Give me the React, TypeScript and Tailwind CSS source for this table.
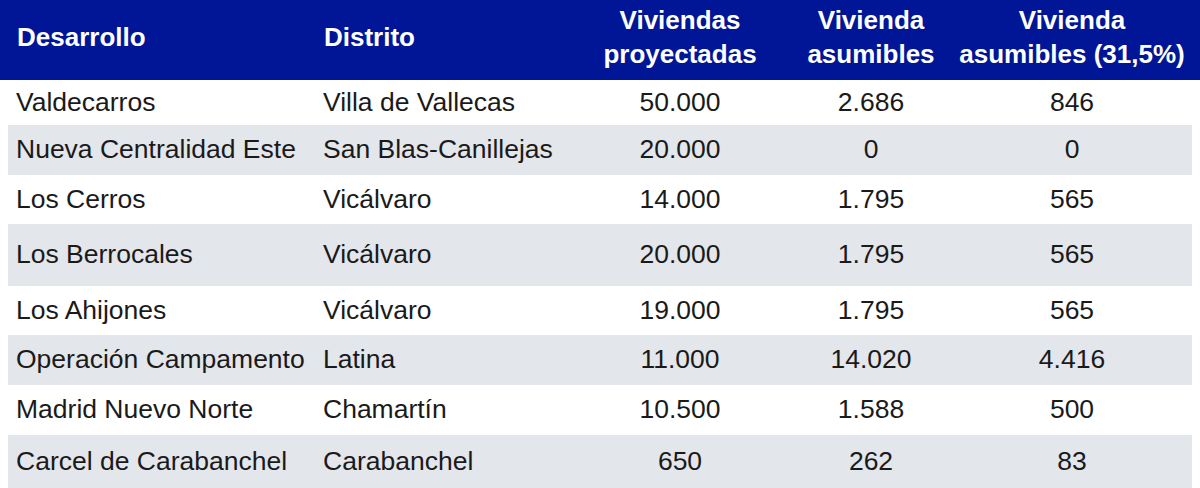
import React from 'react';

interface Row {
    desarrollo: string;
    distrito: string;
    proyectadas: string;
    asumibles: string;
    asumiblesPct: string;
    height: string;
}

const rows: Row[] = [
    { desarrollo: 'Valdecarros', distrito: 'Villa de Vallecas', proyectadas: '50.000', asumibles: '2.686', asumiblesPct: '846', height: 'h-[45px]' },
    { desarrollo: 'Nueva Centralidad Este', distrito: 'San Blas-Canillejas', proyectadas: '20.000', asumibles: '0', asumiblesPct: '0', height: 'h-[50px]' },
    { desarrollo: 'Los Cerros', distrito: 'Vicálvaro', proyectadas: '14.000', asumibles: '1.795', asumiblesPct: '565', height: 'h-[49px]' },
    { desarrollo: 'Los Berrocales', distrito: 'Vicálvaro', proyectadas: '20.000', asumibles: '1.795', asumiblesPct: '565', height: 'h-[62px]' },
    { desarrollo: 'Los Ahijones', distrito: 'Vicálvaro', proyectadas: '19.000', asumibles: '1.795', asumiblesPct: '565', height: 'h-[49px]' },
    { desarrollo: 'Operación Campamento', distrito: 'Latina', proyectadas: '11.000', asumibles: '14.020', asumiblesPct: '4.416', height: 'h-[50px]' },
    { desarrollo: 'Madrid Nuevo Norte', distrito: 'Chamartín', proyectadas: '10.500', asumibles: '1.588', asumiblesPct: '500', height: 'h-[50px]' },
    { desarrollo: 'Carcel de Carabanchel', distrito: 'Carabanchel', proyectadas: '650', asumibles: '262', asumiblesPct: '83', height: 'h-[53px]' },
];

const cols = 'grid grid-cols-[308px_254px_220px_162px_240px]';

export default function App() {
    return (
        <div className="w-[1200px] h-[488px] overflow-hidden bg-white font-['Liberation_Sans',Arial,sans-serif] text-[26px]">
            {/* Header */}
            <div className="bg-[#001696] h-[80px] px-[8px] pb-[7px] text-white font-bold leading-[34px]">
                <div className={`${cols} h-full items-center`}>
                    <div className="pl-[9px]">Desarrollo</div>
                    <div className="pl-[8px]">Distrito</div>
                    <div className="text-center">Viviendas<br />proyectadas</div>
                    <div className="text-center">Vivienda<br />asumibles</div>
                    <div className="text-center">Vivienda<br />asumibles (31,5%)</div>
                </div>
            </div>

            {/* Body */}
            <div className="px-[8px] text-[#1a1a1a] text-[26.5px]">
                {rows.map((row, i) => (
                    <div
                        key={row.desarrollo}
                        className={`${cols} ${row.height} items-center ${i % 2 === 1 ? 'bg-[#e3e6ea]' : 'bg-white'}`}
                    >
                        <div className="pl-[8px] whitespace-nowrap">{row.desarrollo}</div>
                        <div className="pl-[7px] whitespace-nowrap">{row.distrito}</div>
                        <div className="text-center">{row.proyectadas}</div>
                        <div className="text-center">{row.asumibles}</div>
                        <div className="text-center">{row.asumiblesPct}</div>
                    </div>
                ))}
            </div>
        </div>
    );
}
